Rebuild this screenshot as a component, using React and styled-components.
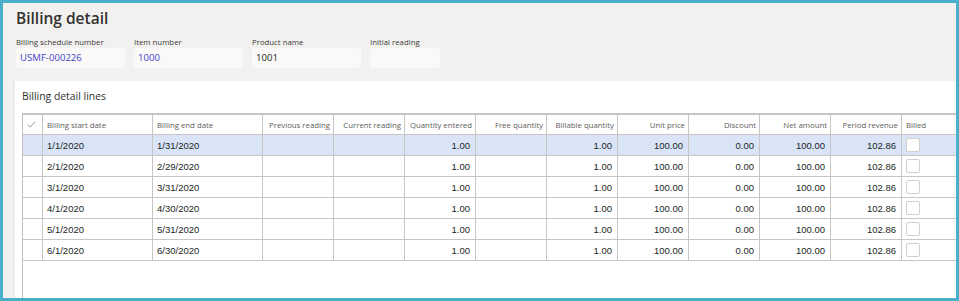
import React from 'react';
import styled, { createGlobalStyle } from 'styled-components';

const GlobalStyle = createGlobalStyle`
  html, body {
    margin: 0;
    padding: 0;
    background: #ffffff;
  }
  * {
    box-sizing: border-box;
  }
`;

const Frame = styled.div`
  width: 959px;
  height: 301px;
  border: 3px solid #4aafc8;
  background: #f2f1f0;
  display: flex;
  flex-direction: column;
  font-family: "Open Sans", "Noto Sans", sans-serif;
  overflow: hidden;
`;

const Header = styled.div`
  padding: 4px 13px 0 13px;
`;

const Title = styled.h1`
  margin: 0;
  font-size: 15.5px;
  line-height: 22px;
  font-weight: 600;
  color: #323130;
`;

const Fields = styled.div`
  display: flex;
  gap: 9px;
  margin-top: 8px;
`;

const Field = styled.div`
  display: flex;
  flex-direction: column;
  width: ${(p) => p.width}px;
`;

const Label = styled.label`
  font-size: 7.8px;
  line-height: 10px;
  height: 10px;
  color: #3b3a39;
  white-space: nowrap;
`;

const Input = styled.div`
  margin-top: 1px;
  height: 20px;
  background: #faf9f8;
  border-radius: 2px;
  padding: 0 4px;
  font-size: 9.6px;
  line-height: 20px;
  color: ${(p) => (p.link ? '#4343c6' : '#201f1e')};
`;

const Panel = styled.div`
  flex: 1;
  margin-top: 13px;
  margin-left: 12px;
  background: #ffffff;
  box-shadow: -2px 0 0 #ebeae9;
  display: flex;
  flex-direction: column;
`;

const PanelTitle = styled.div`
  height: 32px;
  padding-left: 7px;
  font-size: 10.4px;
  line-height: 30px;
  color: #323130;
`;

const Grid = styled.div`
  flex: 1;
  margin-left: 7px;
  border-left: 1px solid #c3c1bf;
  border-top: 2px solid #c8c6c4;
`;

const Row = styled.div`
  display: grid;
  grid-template-columns: 20px 110px 110px repeat(9, 71px) 1fr;
  height: ${(p) => (p.head ? 20 : 21)}px;
  background: ${(p) => (p.selected ? '#dae4f7' : 'transparent')};
`;

const Cell = styled.div`
  border-right: 1px solid #c8c6c4;
  border-bottom: 1px solid #c8c6c4;
  padding: 0 5px 0 4px;
  display: flex;
  align-items: center;
  justify-content: ${(p) => (p.right ? 'flex-end' : 'flex-start')};
  font-family: "Liberation Sans", Arial, sans-serif;
  font-size: 9.5px;
  color: #201f1e;
  white-space: nowrap;
  overflow: hidden;
  &:last-child {
    border-right: none;
  }
`;

const HeadCell = styled(Cell)`
  font-family: "Open Sans", "Noto Sans", sans-serif;
  font-size: 7.8px;
  color: #605e5c;
  padding: 0 3px 0 4px;
`;

const Check = styled.span`
  width: 14px;
  height: 14px;
  border: 1px solid #d2d0ce;
  border-radius: 2px;
  background: #ffffff;
`;

const CheckMark = () => (
  <svg width="9" height="7" viewBox="0 0 9 7">
    <polyline points="0.8,3.6 3.2,6 8.2,0.8" fill="none" stroke="#8a8886" strokeWidth="0.9" />
  </svg>
);

const columns = [
  { label: 'Billing start date' },
  { label: 'Billing end date' },
  { label: 'Previous reading', right: true },
  { label: 'Current reading', right: true },
  { label: 'Quantity entered', right: true },
  { label: 'Free quantity', right: true },
  { label: 'Billable quantity', right: true },
  { label: 'Unit price', right: true },
  { label: 'Discount', right: true },
  { label: 'Net amount', right: true },
  { label: 'Period revenue', right: true },
];

const lines = [
  ['1/1/2020', '1/31/2020'],
  ['2/1/2020', '2/29/2020'],
  ['3/1/2020', '3/31/2020'],
  ['4/1/2020', '4/30/2020'],
  ['5/1/2020', '5/31/2020'],
  ['6/1/2020', '6/30/2020'],
];

const App = () => {
  return (
    <>
      <GlobalStyle />
      <Frame>
        <Header>
          <Title>Billing detail</Title>
          <Fields>
            <Field width={109}>
              <Label>Billing schedule number</Label>
              <Input link>USMF-000226</Input>
            </Field>
            <Field width={109}>
              <Label>Item number</Label>
              <Input link>1000</Input>
            </Field>
            <Field width={109}>
              <Label>Product name</Label>
              <Input>1001</Input>
            </Field>
            <Field width={70}>
              <Label>Initial reading</Label>
              <Input />
            </Field>
          </Fields>
        </Header>
        <Panel>
          <PanelTitle>Billing detail lines</PanelTitle>
          <Grid>
            <Row head>
              <HeadCell>
                <CheckMark />
              </HeadCell>
              {columns.map((c) => (
                <HeadCell key={c.label} right={c.right}>
                  {c.label}
                </HeadCell>
              ))}
              <HeadCell>Billed</HeadCell>
            </Row>
            {lines.map(([start, end], i) => (
              <Row key={start} selected={i === 0}>
                <Cell />
                <Cell>{start}</Cell>
                <Cell>{end}</Cell>
                <Cell />
                <Cell />
                <Cell right>1.00</Cell>
                <Cell />
                <Cell right>1.00</Cell>
                <Cell right>100.00</Cell>
                <Cell right>0.00</Cell>
                <Cell right>100.00</Cell>
                <Cell right>102.86</Cell>
                <Cell>
                  <Check />
                </Cell>
              </Row>
            ))}
          </Grid>
        </Panel>
      </Frame>
    </>
  );
};

export default App;
